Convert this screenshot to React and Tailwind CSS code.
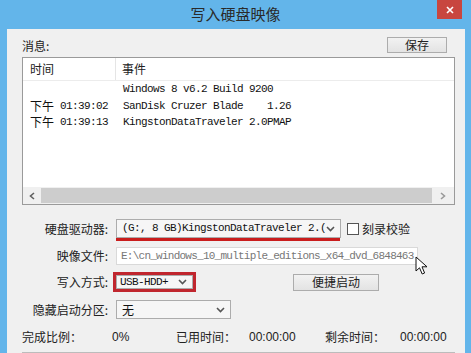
const cjk = "font-['Noto_Sans_CJK_SC',sans-serif]";
const mono = "font-['Liberation_Mono','Noto_Sans_CJK_SC',monospace] text-[11px] tracking-[-0.6px]";

const Chevron = ({ className = "" }) => (
  <svg width="9" height="6" viewBox="0 0 9 6" className={className}>
    <polyline points="1,1 4.5,4.5 8,1" fill="none" stroke="#555" strokeWidth="1.6" />
  </svg>
);

const rows = [
  { day: "", time: "", text: "Windows 8 v6.2 Build 9200" },
  { day: "下午", time: "01:39:02", text: "SanDisk Cruzer Blade    1.26" },
  { day: "下午", time: "01:39:13", text: "KingstonDataTraveler 2.0PMAP" },
];

const Label = ({ children }) => (
  <div className={`w-[101px] shrink-0 text-right text-[12px] text-[#222] ${cjk}`}>{children}</div>
);

export default function App() {
  return (
    <div className="w-[471px] h-[353px] overflow-hidden bg-[#63b5ea] flex flex-col">
      <div className="relative h-[29px] shrink-0 flex items-center justify-center">
        <span className={`text-[15px] text-[#2a2a2a] ${cjk}`}>写入硬盘映像</span>
        <div className="absolute right-[9px] top-0 w-[25px] h-[19px] bg-[#c8463f] flex items-center justify-center">
          <svg width="8" height="8" viewBox="0 0 8 8">
            <path d="M1 1L7 7M7 1L1 7" stroke="#fff" strokeWidth="1.6" />
          </svg>
        </div>
      </div>

      <div className="ml-[7px] mr-[6px] flex-1 bg-[#f0f0f0] flex flex-col">
        <div className="flex items-end pt-[8px] pl-[15px] pr-[18px] h-[24px] justify-between">
          <span className={`text-[12px] text-[#222] leading-none pb-[1px] ${cjk}`}>消息:</span>
          <button className={`w-[60px] h-[16px] border border-[#acacac] bg-gradient-to-b from-[#f2f2f2] to-[#e3e3e3] text-[12px] leading-none text-[#222] ${cjk}`}>
            保存
          </button>
        </div>

        <div className="ml-[15px] mr-[10px] mt-[4px] h-[148px] border border-[#9a9a9a] bg-white flex flex-col">
          <div className={`flex h-[23px] border-b border-[#ececec] text-[12px] text-[#222] ${cjk}`}>
            <div className="w-[93px] pl-[7px] border-r border-[#e5e5e5] flex items-center">时间</div>
            <div className="pl-[6px] flex items-center">事件</div>
          </div>
          {rows.map((r, i) => (
            <div key={i} className="flex h-[16.5px] items-center text-[#111] whitespace-pre">
              <div className="w-[100px] pl-[7px] flex items-center">
                <span className={`text-[12px] w-[30px] ${cjk}`}>{r.day}</span>
                <span className={mono}>{r.time}</span>
              </div>
              <span className={mono}>{r.text}</span>
            </div>
          ))}
          <div className="flex-1" />
          <div className="h-[17px] flex bg-[#f0f0f0]">
            <div className="w-[18px] flex items-center justify-center">
              <svg width="6" height="8" viewBox="0 0 6 8">
                <polyline points="5,1 1.5,4 5,7" fill="none" stroke="#606060" strokeWidth="1.6" />
              </svg>
            </div>
            <div className="flex-1 my-[1px] bg-[#cdcdcd]" />
            <div className="w-[22px] flex items-center justify-center">
              <svg width="6" height="8" viewBox="0 0 6 8">
                <polyline points="1,1 4.5,4 1,7" fill="none" stroke="#9a9a9a" strokeWidth="1.6" />
              </svg>
            </div>
          </div>
        </div>

        <div className="flex items-start mt-[14px]">
          <div className="h-[19px] flex items-center"><Label>硬盘驱动器:</Label></div>
          <div className="ml-[8px] flex flex-col">
            <div className="w-[225px] h-[19px] border border-[#acacac] bg-[#f6f6f6] flex items-center pl-[5px] pr-[5px]">
              <span className={`${mono} flex-1 overflow-hidden whitespace-pre text-[#111]`}>(G:, 8 GB)KingstonDataTraveler 2.(</span>
              <Chevron />
            </div>
            <div className="h-[3px] w-[224px] bg-[#c91d1d]" />
          </div>
          <div className="ml-[6px] h-[19px] flex items-center">
            <div className="w-[12px] h-[12px] border border-[#555] bg-white" />
            <span className={`ml-[3px] text-[12px] text-[#222] ${cjk}`}>刻录校验</span>
          </div>
        </div>

        <div className="flex items-center mt-[6px] h-[18px]">
          <Label>映像文件:</Label>
          <div className="relative ml-[8px] w-[302px] h-[18px] border border-[#d9d9d9] bg-white flex items-center pl-[4px]">
            <span className="font-['Liberation_Mono',monospace] text-[11px] tracking-[-0.75px] text-[#777] whitespace-pre">E:\cn_windows_10_multiple_editions_x64_dvd_6848463</span>
            <svg className="absolute left-[298px] top-[8px]" width="14" height="20" viewBox="0 0 14 20">
              <path d="M1 1L1 15L4.5 11.8L7.2 18L9.6 17L7 10.8L12 10.8Z" fill="#fff" stroke="#111" strokeWidth="1" strokeLinejoin="round" />
            </svg>
          </div>
        </div>

        <div className="flex items-center mt-[7px] h-[20px]">
          <Label>写入方式:</Label>
          <div className="ml-[5px] w-[83px] h-[20px] border-[3px] border-[#c0262e] flex">
            <div className="flex-1 bg-[#f6f6f6] border border-[#acacac] flex items-center pl-[3px] pr-[5px]">
              <span className={`${mono} flex-1 text-[#111]`}>USB-HDD+</span>
              <Chevron />
            </div>
          </div>
          <button className={`ml-[97px] w-[86px] h-[17px] border border-[#acacac] bg-gradient-to-b from-[#f2f2f2] to-[#e3e3e3] text-[12px] leading-none text-[#222] ${cjk}`}>
            便捷启动
          </button>
        </div>

        <div className="flex items-center mt-[8px] h-[19px]">
          <Label>隐藏启动分区:</Label>
          <div className="ml-[8px] w-[115px] h-[19px] border border-[#acacac] bg-[#f6f6f6] flex items-center pl-[5px] pr-[5px]">
            <span className={`flex-1 text-[12px] text-[#111] ${cjk}`}>无</span>
            <Chevron />
          </div>
        </div>

        <div className="flex items-center mt-[9px] h-[18px] pl-[15px] text-[12px] text-[#222]">
          <span className={`w-[90px] ${cjk}`}>完成比例：</span>
          <span className="w-[64px] font-['Liberation_Sans',sans-serif]">0%</span>
          <span className={`w-[73px] ${cjk}`}>已用时间：</span>
          <span className="w-[76px] font-['Liberation_Sans',sans-serif]">00:00:00</span>
          <span className={`w-[75px] ${cjk}`}>剩余时间：</span>
          <span className="font-['Liberation_Sans',sans-serif]">00:00:00</span>
        </div>

        <div className="ml-[15px] mr-[10px] mt-[6px] h-[20px] border border-[#bcbcbc] bg-[#e6e6e6]" />
      </div>
    </div>
  );
}
